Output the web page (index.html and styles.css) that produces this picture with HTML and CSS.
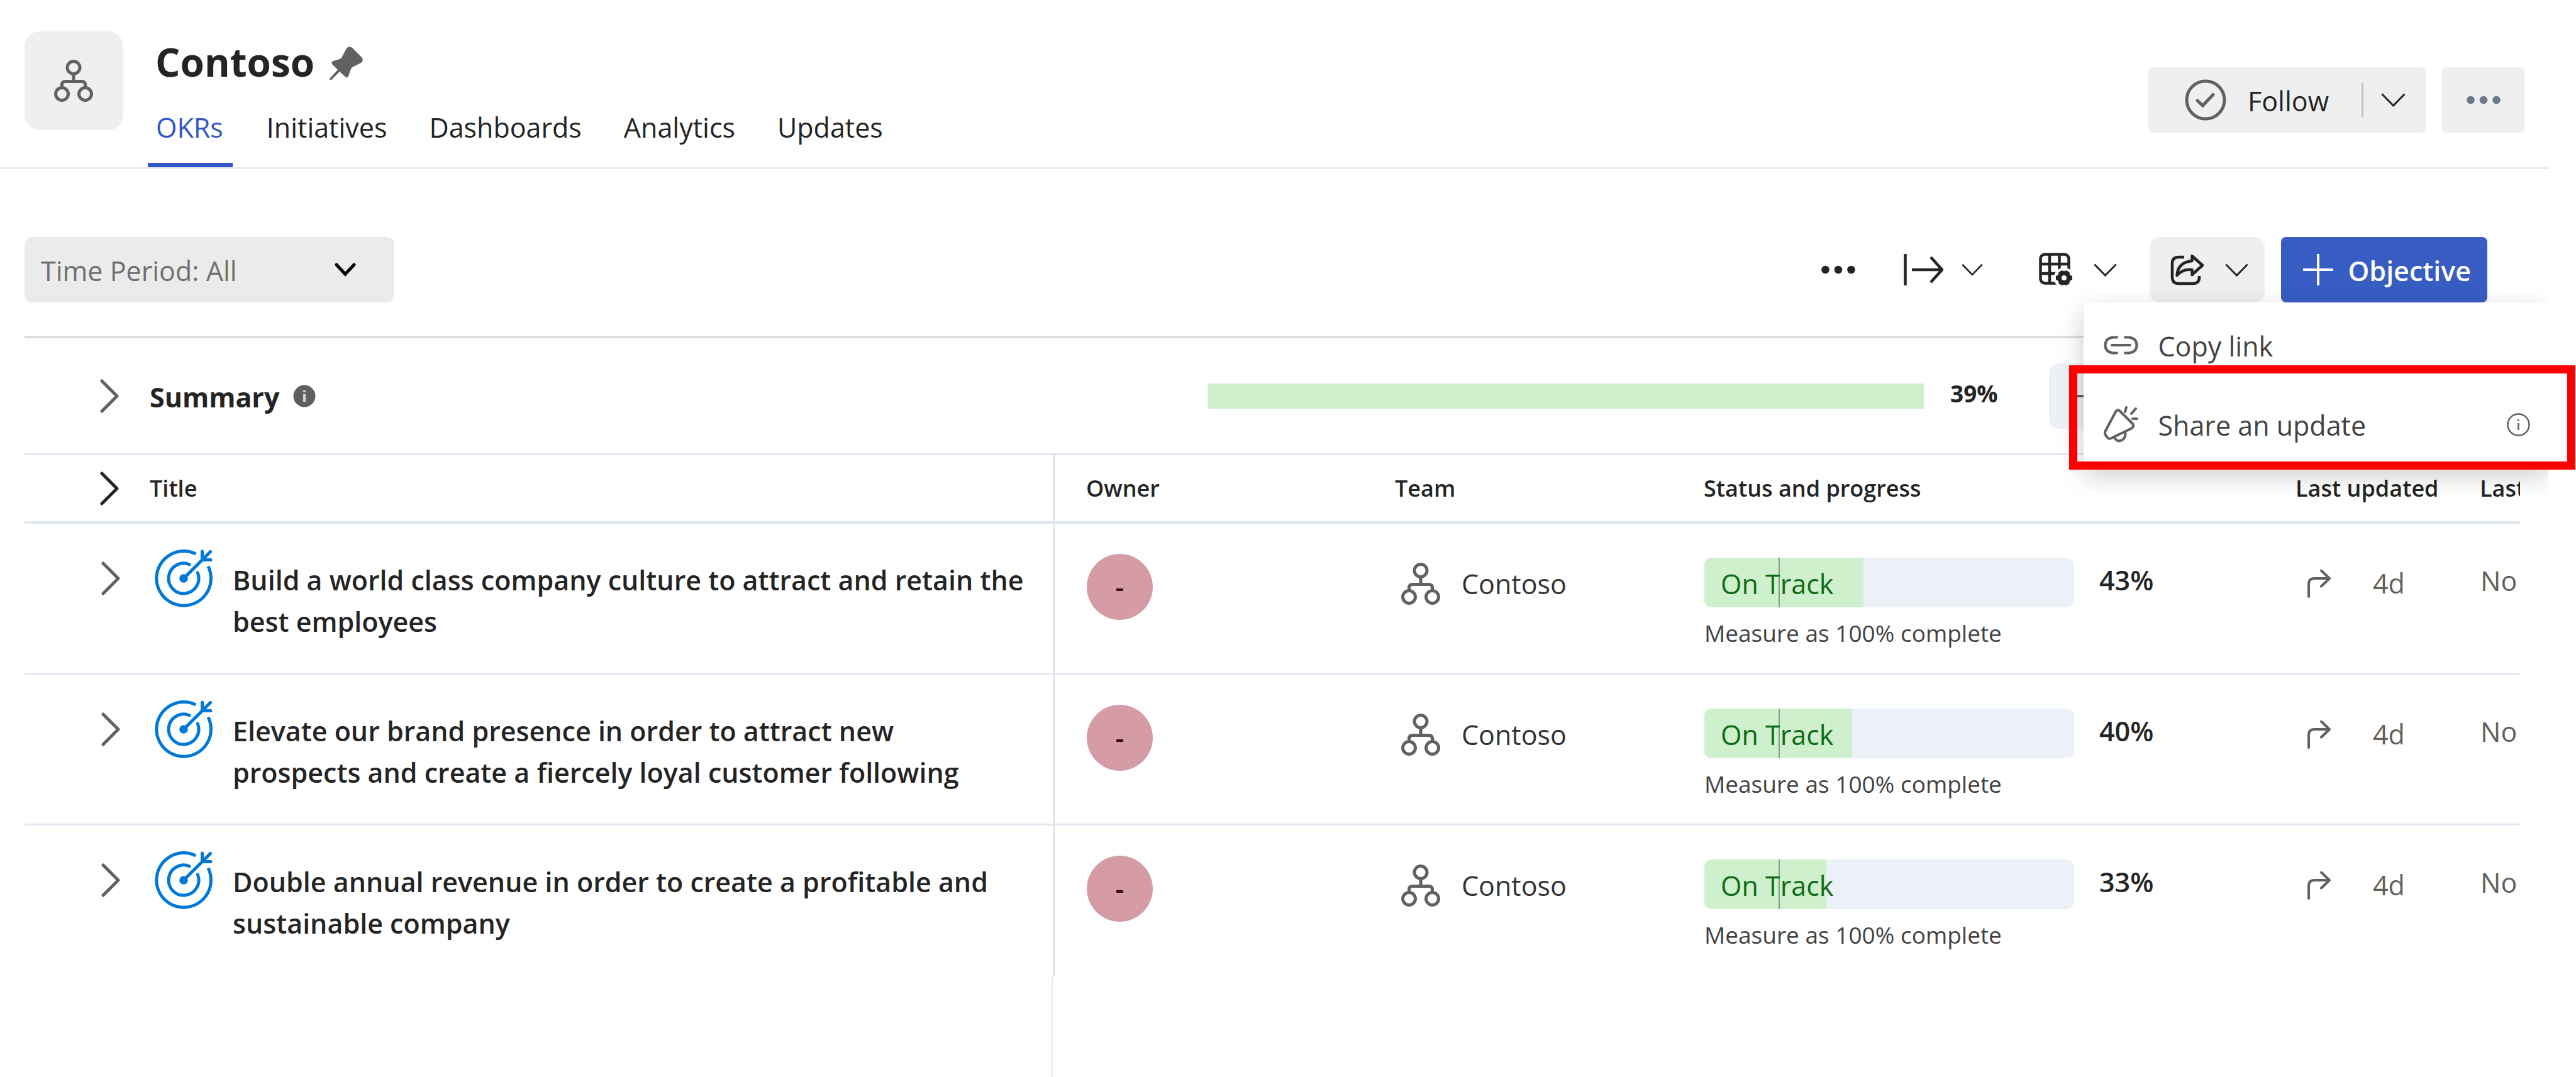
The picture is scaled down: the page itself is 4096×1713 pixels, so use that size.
FILE: index.html
```html
<!DOCTYPE html>
<html lang="en">
<head>
<meta charset="utf-8">
<title>Contoso - OKRs</title>
<link rel="stylesheet" href="styles.css">
</head>
<body>
<svg class="sprite" aria-hidden="true">
  <symbol id="org" viewBox="0 0 62 67"><g fill="none" stroke="currentColor" stroke-width="5"><circle cx="31" cy="12.500" r="10"/><circle cx="12.500" cy="54.500" r="10"/><circle cx="49.500" cy="54.500" r="10"/><path d="M31 22.500V34M12.500 44.500V40Q12.500 34.500 18 34.500H44Q49.500 34.500 49.500 40V44.500"/></g></symbol>
  <symbol id="chev-down" viewBox="0 0 39 22"><path d="M1.500 1.500L19.500 20L37.500 1.500" fill="none" stroke="currentColor" stroke-width="3"/></symbol>
  <symbol id="chev-right" viewBox="0 0 30 54"><path d="M3 3L27 27L3 51" fill="none" stroke="currentColor" stroke-width="5" stroke-linecap="round" stroke-linejoin="round"/></symbol>
  <symbol id="dots" viewBox="0 0 54 14"><g fill="currentColor"><circle cx="6.500" cy="7" r="6.300"/><circle cx="27" cy="7" r="6.300"/><circle cx="47.500" cy="7" r="6.300"/></g></symbol>
  <symbol id="goal" viewBox="0 0 92 92"><g fill="none" stroke="currentColor" stroke-width="5"><path d="M65.300 7A43.300 43.300 0 1 0 85 26.700"/><path d="M55 23.700A24 24 0 1 0 68.300 37" stroke-linecap="round"/><path d="M46 46L88.500 3.500M75.500 3V16.500H89" stroke-linecap="round"/></g><circle cx="46" cy="46" r="6.800" fill="currentColor"/></symbol>
  <symbol id="turn" viewBox="0 0 40 45"><path d="M3 43V23Q3 14 12 14H36M23 1.500L36 14L23 26.500" fill="none" stroke="currentColor" stroke-width="4" stroke-linecap="round" stroke-linejoin="round"/></symbol>
</svg>

<header class="page-header">
  <div class="tile"><svg width="62" height="67"><use href="#org"/></svg></div>
  <div class="heading">
    <h1>Contoso
      <svg width="54" height="54" viewBox="0 0 54 54" fill="currentColor"><path d="M27 3Q31 -2 36 2L51 17Q55 22 50 26L36 33Q34 35 33 38L30 47Q28 51 25 48L16 40L3 53L0 53L1 50L13 37L5 29Q1 25 6 23L16 20Q19 19 20 16Z"/></svg>
    </h1>
    <nav class="tabs">
      <a class="active" href="#okrs">OKRs</a>
      <a href="#initiatives">Initiatives</a>
      <a href="#dashboards">Dashboards</a>
      <a href="#analytics">Analytics</a>
      <a href="#updates">Updates</a>
    </nav>
  </div>
  <div class="header-actions">
    <div class="split">
      <button class="follow" type="button">
        <svg width="66" height="66" viewBox="0 0 66 66" fill="none" stroke="currentColor" stroke-width="5"><circle cx="33" cy="33" r="30"/><path d="M20 34L28.500 42L45 24.500" stroke-linecap="round"/></svg>
        <span>Follow</span>
      </button>
      <button class="follow-more" type="button" aria-label="Follow options"><svg width="39" height="22"><use href="#chev-down"/></svg></button>
    </div>
    <button class="more" type="button" aria-label="More"><svg width="54" height="14"><use href="#dots"/></svg></button>
  </div>
</header>

<div class="toolbar">
  <div class="period">
    <select aria-label="Time period"><option>Time Period: All</option></select>
    <svg width="34" height="22" viewBox="0 0 34 22"><path d="M3 3L17 18L31 3" fill="none" stroke="#000" stroke-width="5" stroke-linecap="round"/></svg>
  </div>
  <div class="tools">
    <button class="tool dots" type="button" aria-label="More options"><svg width="54" height="14"><use href="#dots"/></svg></button>
    <button class="tool expand" type="button" aria-label="Expand">
      <svg width="63" height="50" viewBox="0 0 63 50" fill="none" stroke="currentColor" stroke-width="4.500"><path d="M2.500 0V50M13 25H60M43 5L61 25L43 45"/></svg>
      <svg width="34" height="20"><use href="#chev-down"/></svg>
    </button>
    <button class="tool" type="button" aria-label="View settings">
      <svg width="54" height="54" viewBox="0 0 54 54" fill="none" stroke="currentColor" stroke-width="4.500"><rect x="2.500" y="2.500" width="45" height="46" rx="7"/><path d="M17 3V48M32.500 3V48M3 18H47M3 33H47"/><circle cx="40" cy="40" r="14" fill="#fff" stroke="#fff"/><circle cx="40" cy="40" r="7.500" stroke-width="7"/><g stroke-width="7"><path d="M34 29.600L36.500 34M46 29.600L43.500 34M34 50.400L36.500 46M46 50.400L43.500 46M27 40H33M47 40H53"/></g></svg>
      <svg width="39" height="21"><use href="#chev-down"/></svg>
    </button>
    <div class="share">
      <button class="tool open" type="button" aria-label="Share" aria-expanded="true">
        <svg width="54" height="50" viewBox="0 0 54 50" fill="none" stroke="currentColor" stroke-width="4.500" stroke-linejoin="round"><path d="M22 5H13Q3 5 3 15V37Q3 47 13 47H36Q46 47 46 37V35"/><path d="M34.500 3L51 18L34.500 33V25Q20 23 10.500 34Q12 13 34.500 11Z"/></svg>
        <svg width="39" height="21"><use href="#chev-down"/></svg>
      </button>
      <div class="menu" role="menu">
        <button type="button" role="menuitem">
          <svg width="55" height="30" viewBox="0 0 55 30" fill="none" stroke="currentColor" stroke-width="4"><path d="M21 2.500H15Q2.500 4 2.500 15T15 27.500H21M34 2.500H40Q52.500 4 52.500 15T40 27.500H34M13 15H42" stroke-linecap="round"/></svg>
          <span>Copy link</span>
        </button>
        <button type="button" role="menuitem">
          <svg width="55" height="58" viewBox="0 0 55 58" fill="none" stroke="currentColor" stroke-width="4" stroke-linecap="round" stroke-linejoin="round"><path d="M19 9Q22 4 26 8L46 28Q49 32 45 35L12 51Q8 53 6 50L3 46Q1 43 3 39ZM17 50Q22 58 29 54Q36 50 34 41M36 2L34 9M51 4L44 12M46 20H53"/></svg>
          <span>Share an update</span>
          <svg class="hint" width="37" height="37" viewBox="0 0 37 37" fill="none" stroke="currentColor" stroke-width="2.500"><circle cx="18.500" cy="18.500" r="17"/><path d="M18.500 16V27M18.500 10V13"/></svg>
        </button>
      </div>
      <div class="highlight"></div>
    </div>
    <button class="primary" type="button">
      <svg width="48" height="50" viewBox="0 0 48 50" fill="none" stroke="currentColor" stroke-width="4"><path d="M24 0V50M0 25H48"/></svg>
      <span>Objective</span>
    </button>
  </div>
</div>

<main class="board">
  <section class="summary">
    <div class="summary-title">
      <button class="toggle" type="button" aria-label="Expand summary"><svg width="30" height="54"><use href="#chev-right"/></svg></button>
      <h2>Summary</h2>
      <svg width="36" height="36" viewBox="0 0 36 36"><circle cx="18" cy="18" r="17.500" fill="#5f5f5f"/><path d="M18 15V27M18 9V12" stroke="#d6d6d6" stroke-width="4"/></svg>
    </div>
    <div class="summary-bar" role="progressbar" aria-label="Overall progress" aria-valuenow="39"></div>
    <div class="summary-value">39%</div>
    <div class="summary-tools"><span class="chip"><svg width="40" height="4"><path d="M0 2H40" stroke="#616161" stroke-width="4"/></svg></span></div>
  </section>

  <table>
    <colgroup><col><col class="c-owner"><col class="c-team"><col class="c-status"><col class="c-updated"><col class="c-last"></colgroup>
    <thead>
      <tr>
        <th scope="col"><div class="title-head"><button class="toggle dark" type="button" aria-label="Expand all"><svg width="30" height="54"><use href="#chev-right"/></svg></button>Title</div></th>
        <th scope="col">Owner</th><th scope="col">Team</th><th scope="col">Status and progress</th><th scope="col">Last updated</th><th scope="col">Last</th>
      </tr>
    </thead>
    <tbody>
      <tr>
        <td><div class="objective"><button class="toggle" type="button" aria-label="Expand"><svg width="30" height="54"><use href="#chev-right"/></svg></button><svg class="goal" width="92" height="92"><use href="#goal"/></svg><p>Build a world class company culture to attract and retain the best employees</p></div></td>
        <td><div class="avatar">-</div></td>
        <td><div class="team"><svg width="62" height="67"><use href="#org"/></svg>Contoso</div></td>
        <td><div class="status"><div class="meter"><div class="fill" style="width:43%"></div><span class="mark"></span><span class="label">On Track</span></div><b>43%</b></div><div class="measure">Measure as 100% complete</div></td>
        <td><div class="updated"><svg width="40" height="45"><use href="#turn"/></svg>4d</div></td>
        <td><div class="last">No</div></td>
      </tr>
      <tr>
        <td><div class="objective"><button class="toggle" type="button" aria-label="Expand"><svg width="30" height="54"><use href="#chev-right"/></svg></button><svg class="goal" width="92" height="92"><use href="#goal"/></svg><p>Elevate our brand presence in order to attract new prospects and create a fiercely loyal customer following</p></div></td>
        <td><div class="avatar">-</div></td>
        <td><div class="team"><svg width="62" height="67"><use href="#org"/></svg>Contoso</div></td>
        <td><div class="status"><div class="meter"><div class="fill" style="width:40%"></div><span class="mark"></span><span class="label">On Track</span></div><b>40%</b></div><div class="measure">Measure as 100% complete</div></td>
        <td><div class="updated"><svg width="40" height="45"><use href="#turn"/></svg>4d</div></td>
        <td><div class="last">No</div></td>
      </tr>
      <tr>
        <td><div class="objective"><button class="toggle" type="button" aria-label="Expand"><svg width="30" height="54"><use href="#chev-right"/></svg></button><svg class="goal" width="92" height="92"><use href="#goal"/></svg><p>Double annual revenue in order to create a profitable and sustainable company</p></div></td>
        <td><div class="avatar">-</div></td>
        <td><div class="team"><svg width="62" height="67"><use href="#org"/></svg>Contoso</div></td>
        <td><div class="status"><div class="meter"><div class="fill" style="width:33%"></div><span class="mark"></span><span class="label">On Track</span></div><b>33%</b></div><div class="measure">Measure as 100% complete</div></td>
        <td><div class="updated"><svg width="40" height="45"><use href="#turn"/></svg>4d</div></td>
        <td><div class="last">No</div></td>
      </tr>
    </tbody>
  </table>
  <div class="rest"><div class="rest-title"></div></div>
</main>
</body>
</html>
```

FILE: styles.css
```css
* { box-sizing: border-box; }

body {
  margin: 0;
  min-height: 100vh;
  display: flex;
  flex-direction: column;
  background: #fff;
  color: #242424;
  font-family: "Open Sans", "Noto Sans", sans-serif;
  font-size: 43px;
  line-height: 62px;
}

button {
  border: 0;
  margin: 0;
  padding: 0;
  background: none;
  color: inherit;
  font: inherit;
  display: flex;
  align-items: center;
}
button span { padding-top: 4px; }

svg { flex: none; display: block; }
.sprite { position: absolute; width: 0; height: 0; }

/* Header */
.page-header {
  display: flex;
  align-items: flex-start;
  gap: 39px;
  margin-right: 43px;
  padding: 50px 39px 0 39px;
  border-bottom: 3px solid #ebebeb;
}
.tile {
  width: 157px;
  height: 157px;
  padding-right: 2px;
  border-radius: 24px;
  background: #efefef;
  color: #616161;
  display: grid;
  place-items: center;
}
.heading { flex: 1; }
h1 {
  margin: 0;
  padding-left: 12px;
  font-size: 62px;
  line-height: 96px;
  font-weight: 700;
  display: flex;
  align-items: center;
  gap: 24px;
}
h1 svg { margin-top: 5px; color: #616161; }
.tabs { display: flex; gap: 41px; }
.tabs a {
  padding: 26px 13px 25px;
  border-bottom: 7px solid transparent;
  color: #242424;
  text-decoration: none;
}
.tabs a.active { padding-right: 15px; color: #3158c4; border-color: #3158c4; }

.header-actions { display: flex; gap: 26px; padding-top: 57px; }
.split {
  display: flex;
  align-items: center;
  height: 104px;
  border-radius: 8px;
  background: #efefef;
}
.follow { gap: 34px; padding: 0 52px 0 58px; }
.follow svg { color: #616161; }
.follow-more {
  height: 54px;
  border-left: 3px solid #c4c2c0;
  padding: 0 32px 0 28px;
}
.more {
  width: 131px;
  height: 104px;
  border-radius: 8px;
  background: #efefef;
  color: #6b7a89;
  justify-content: center;
}

/* Toolbar */
.toolbar {
  display: flex;
  justify-content: space-between;
  margin: 108px 141px 53px 39px;
}
.period {
  display: grid;
  align-items: center;
  width: 588px;
  height: 104px;
  border-radius: 12px;
  background: #ebebeb;
}
.period > * { grid-area: 1 / 1; }
.period select {
  appearance: none;
  width: 100%;
  height: 104px;
  border: 0;
  padding: 4px 26px 0;
  background: none;
  color: #707070;
  font: inherit;
}
.period svg { justify-self: end; margin-right: 61px; pointer-events: none; }
.tools { display: flex; gap: 26px; }
.tool {
  height: 104px;
  gap: 32px;
  padding: 0 25px 0 33px;
  border-radius: 16px;
}
.tool.dots { padding: 0 23px; }
.tool.expand { gap: 29px; padding: 0 30px 0 28px; }
.tool.open { background: #efefef; }
.primary {
  gap: 24px;
  padding: 0 26px 0 35px;
  border-radius: 8px;
  background: #375dc3;
  color: #fff;
  font-weight: 600;
}

/* Share menu */
.share { position: relative; }
.menu {
  position: absolute;
  z-index: 2;
  top: 100%;
  left: -105px;
  width: 739px;
  padding: 5px 0;
  background: #fff;
  border-radius: 8px 0 0 8px;
  box-shadow: 0 14px 40px rgba(0, 0, 0, .2);
  clip-path: inset(-60px 0 -90px -60px);
}
.menu button {
  width: 100%;
  height: 126px;
  gap: 32px;
  padding: 0 29px 0 32px;
  color: #424242;
}
.menu button svg { color: #616161; }
.menu .hint { margin-left: auto; }
.highlight {
  position: absolute;
  z-index: 3;
  top: calc(100% + 100px);
  left: -128px;
  width: 805px;
  height: 166px;
  border: 13px solid #f00;
  pointer-events: none;
}

/* Board */
.board {
  flex: 1;
  display: flex;
  flex-direction: column;
  margin: 0 89px 0 39px;
  border-top: 4px solid #dcdcdc;
}
.toggle { color: #616161; }
.toggle.dark { color: #242424; }

.summary { display: flex; align-items: center; height: 183px; }
.summary-title {
  flex: 1;
  display: flex;
  align-items: center;
  padding-left: 120px;
}
.summary-title h2 {
  margin: 0 22px 0 49px;
  padding-top: 4px;
  font-size: 43px;
  font-weight: 700;
}
.summary-bar { width: 1139px; height: 40px; background: #cef0cd; }
.summary-value {
  width: 199px;
  padding: 0 0 8px 42px;
  font-size: 37px;
  font-weight: 700;
}
.summary-tools { width: 749px; }
.chip {
  display: flex;
  align-items: center;
  width: 150px;
  height: 104px;
  padding-left: 42px;
  border-radius: 16px;
  background: #ebf1f6;
}

table {
  width: 100%;
  table-layout: fixed;
  border-collapse: separate;
  border-spacing: 0;
}
.c-owner { width: 491px; }
.c-team { width: 491px; }
.c-status { width: 941px; }
.c-updated { width: 293px; }
.c-last { width: 114px; }

th {
  height: 112px;
  padding: 0 0 0 50px;
  border-top: 3px solid #dfe8f0;
  border-bottom: 4px solid #dfe8f0;
  font-size: 36px;
  font-weight: 600;
  text-align: left;
  white-space: nowrap;
  overflow: hidden;
}
td {
  height: 240px;
  padding: 0 0 0 51px;
  border-bottom: 3px solid #dfe8f0;
  vertical-align: top;
}
tbody tr:last-child td { border-bottom: 0; }
th:first-child, td:first-child { padding: 0; border-right: 2px solid #dcdcdc; }
.title-head { display: flex; align-items: center; gap: 49px; padding-left: 120px; }

.objective {
  display: flex;
  align-items: flex-start;
  padding: 41px 42px 0 122px;
}
.objective .toggle { height: 92px; }
.goal { margin: 0 32px 0 55px; color: #0078d7; }
.objective p {
  flex: 1;
  margin: 16px 0 0;
  font-size: 43px;
  line-height: 66px;
  font-weight: 600;
}
.avatar {
  width: 105px;
  height: 105px;
  margin-top: 48px;
  border-radius: 50%;
  background: #d69ca5;
  color: #3b0509;
  font-weight: 600;
  line-height: 105px;
  text-align: center;
}
.team {
  display: flex;
  align-items: center;
  gap: 34px;
  margin-top: 62px;
  padding-left: 9px;
  color: #333;
}
.team svg { color: #616161; }
.status { display: flex; align-items: flex-start; gap: 40px; padding-top: 54px; }
.meter {
  position: relative;
  width: 588px;
  height: 79px;
  border-radius: 12px;
  overflow: hidden;
  background: #ebf1f6;
}
.fill { height: 100%; background: #cef0cd; }
.mark {
  position: absolute;
  top: 0;
  bottom: 0;
  left: 20%;
  width: 2px;
  background: #8a9a8a;
}
.label {
  position: absolute;
  top: 11px;
  left: 26px;
  color: #0f6c16;
}
.status b { margin-top: 5px; font-size: 43px; font-weight: 600; }
.measure { margin-top: 10px; font-size: 37px; color: #424242; }
.updated {
  display: flex;
  align-items: center;
  gap: 65px;
  margin-top: 64px;
  padding-left: 17px;
  color: #616161;
}
.last { padding-top: 60px; color: #616161; overflow: hidden; }

.rest { flex: 1; display: flex; padding-right: 2333px; }
.rest-title { flex: 1; border-right: 2px solid #e8e8e8; }
```
